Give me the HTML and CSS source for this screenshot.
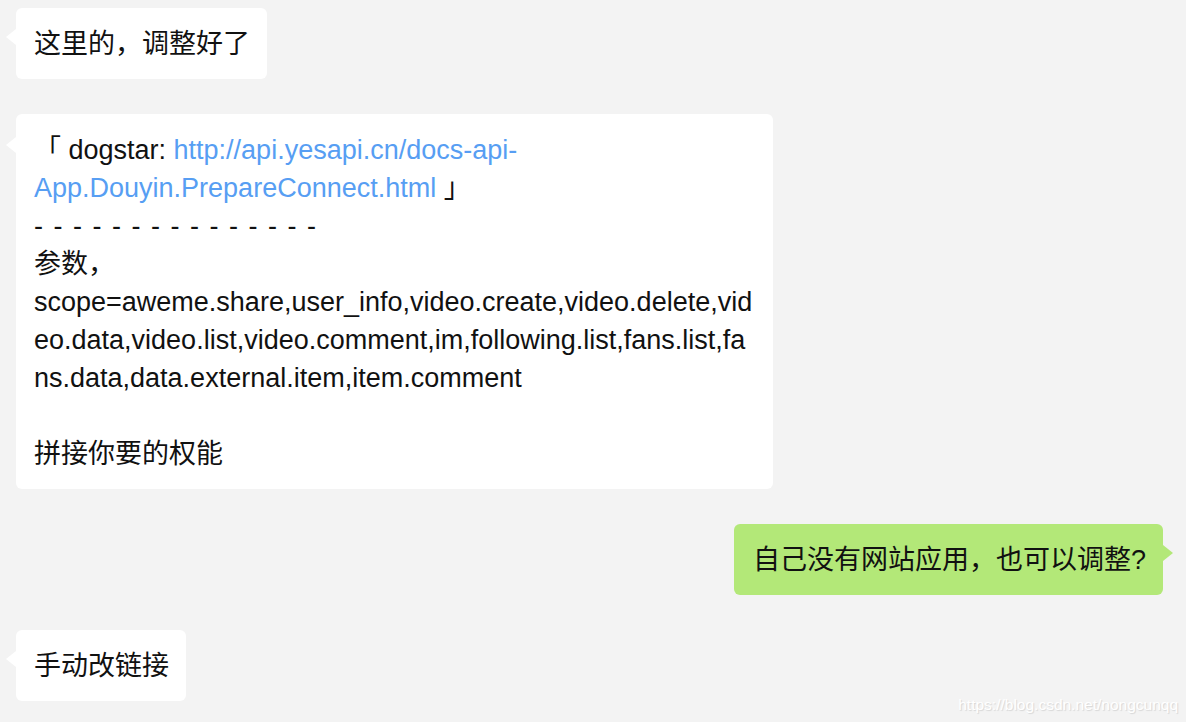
FILE: index.html
```html
<!DOCTYPE html>
<html lang="zh-CN">
<head>
<meta charset="utf-8">
<title>聊天</title>
<link rel="stylesheet" href="styles.css">
</head>
<body>
<div class="chat">
  <div class="row left">
    <div class="bubble">这里的，调整好了</div>
  </div>
  <div class="row left">
    <div class="bubble wide">
      <div>「 dogstar: <a class="link" href="#">http://api.yesapi.cn/docs-api-App.Douyin.PrepareConnect.html</a> 」</div>
      <div class="dashes">- - - - - - - - - - - - - - -</div>
      <div>参数，</div>
      <div class="scope">scope=aweme.share,user_info,video.create,video.delete,video.data,video.list,video.comment,im,following.list,fans.list,fans.data,data.external.item,item.comment</div>
      <div class="blank">&nbsp;</div>
      <div>拼接你要的权能</div>
    </div>
  </div>
  <div class="row right">
    <div class="bubble mine">自己没有网站应用，也可以调整?</div>
  </div>
  <div class="row left">
    <div class="bubble">手动改链接</div>
  </div>
</div>
<div class="watermark">https://blog.csdn.net/nongcunqq</div>
</body>
</html>
```

FILE: styles.css
```css
html, body {
  margin: 0;
  padding: 0;
  background: #f3f3f3;
}
body {
  width: 1186px;
  height: 722px;
  overflow: hidden;
  position: relative;
  font-family: "Liberation Sans", "Noto Sans CJK SC", sans-serif;
  font-size: 27px;
  line-height: 38px;
  color: #111;
}
.chat {
  display: flex;
  flex-direction: column;
  gap: 35px;
  padding: 8px 23px 0 16px;
}
.row {
  display: flex;
}
.row.left { justify-content: flex-start; }
.row.right { justify-content: flex-end; }
.bubble {
  position: relative;
  background: #ffffff;
  border-radius: 6px;
  padding: 17px 17px 16px 18px;
}
.bubble::before {
  content: "";
  position: absolute;
  top: 21px;
  left: -10px;
  border-style: solid;
  border-width: 8px 10px 8px 0;
  border-color: transparent #ffffff transparent transparent;
}
.bubble.wide {
  width: 757px;
  box-sizing: border-box;
  padding-right: 18px;
  overflow-wrap: break-word;
}
.bubble.wide::before { top: 23px; }
.bubble.mine {
  background: #b3e878;
  padding: 17px 17px 16px 19px;
}
.bubble.mine::before {
  left: auto;
  right: -10px;
  border-width: 8px 0 8px 10px;
  border-color: transparent transparent transparent #b3e878;
}
.link {
  color: #579ef3;
  text-decoration: none;
}
.dashes {
  word-spacing: 3px;
}
.scope {
  word-break: break-all;
}
.watermark {
  position: absolute;
  right: 8px;
  bottom: 8px;
  font-family: "Liberation Sans", sans-serif;
  font-size: 15.5px;
  line-height: 18px;
  color: #ffffff;
  text-shadow: 1px 1px 1px rgba(0, 0, 0, 0.12);
}
```
